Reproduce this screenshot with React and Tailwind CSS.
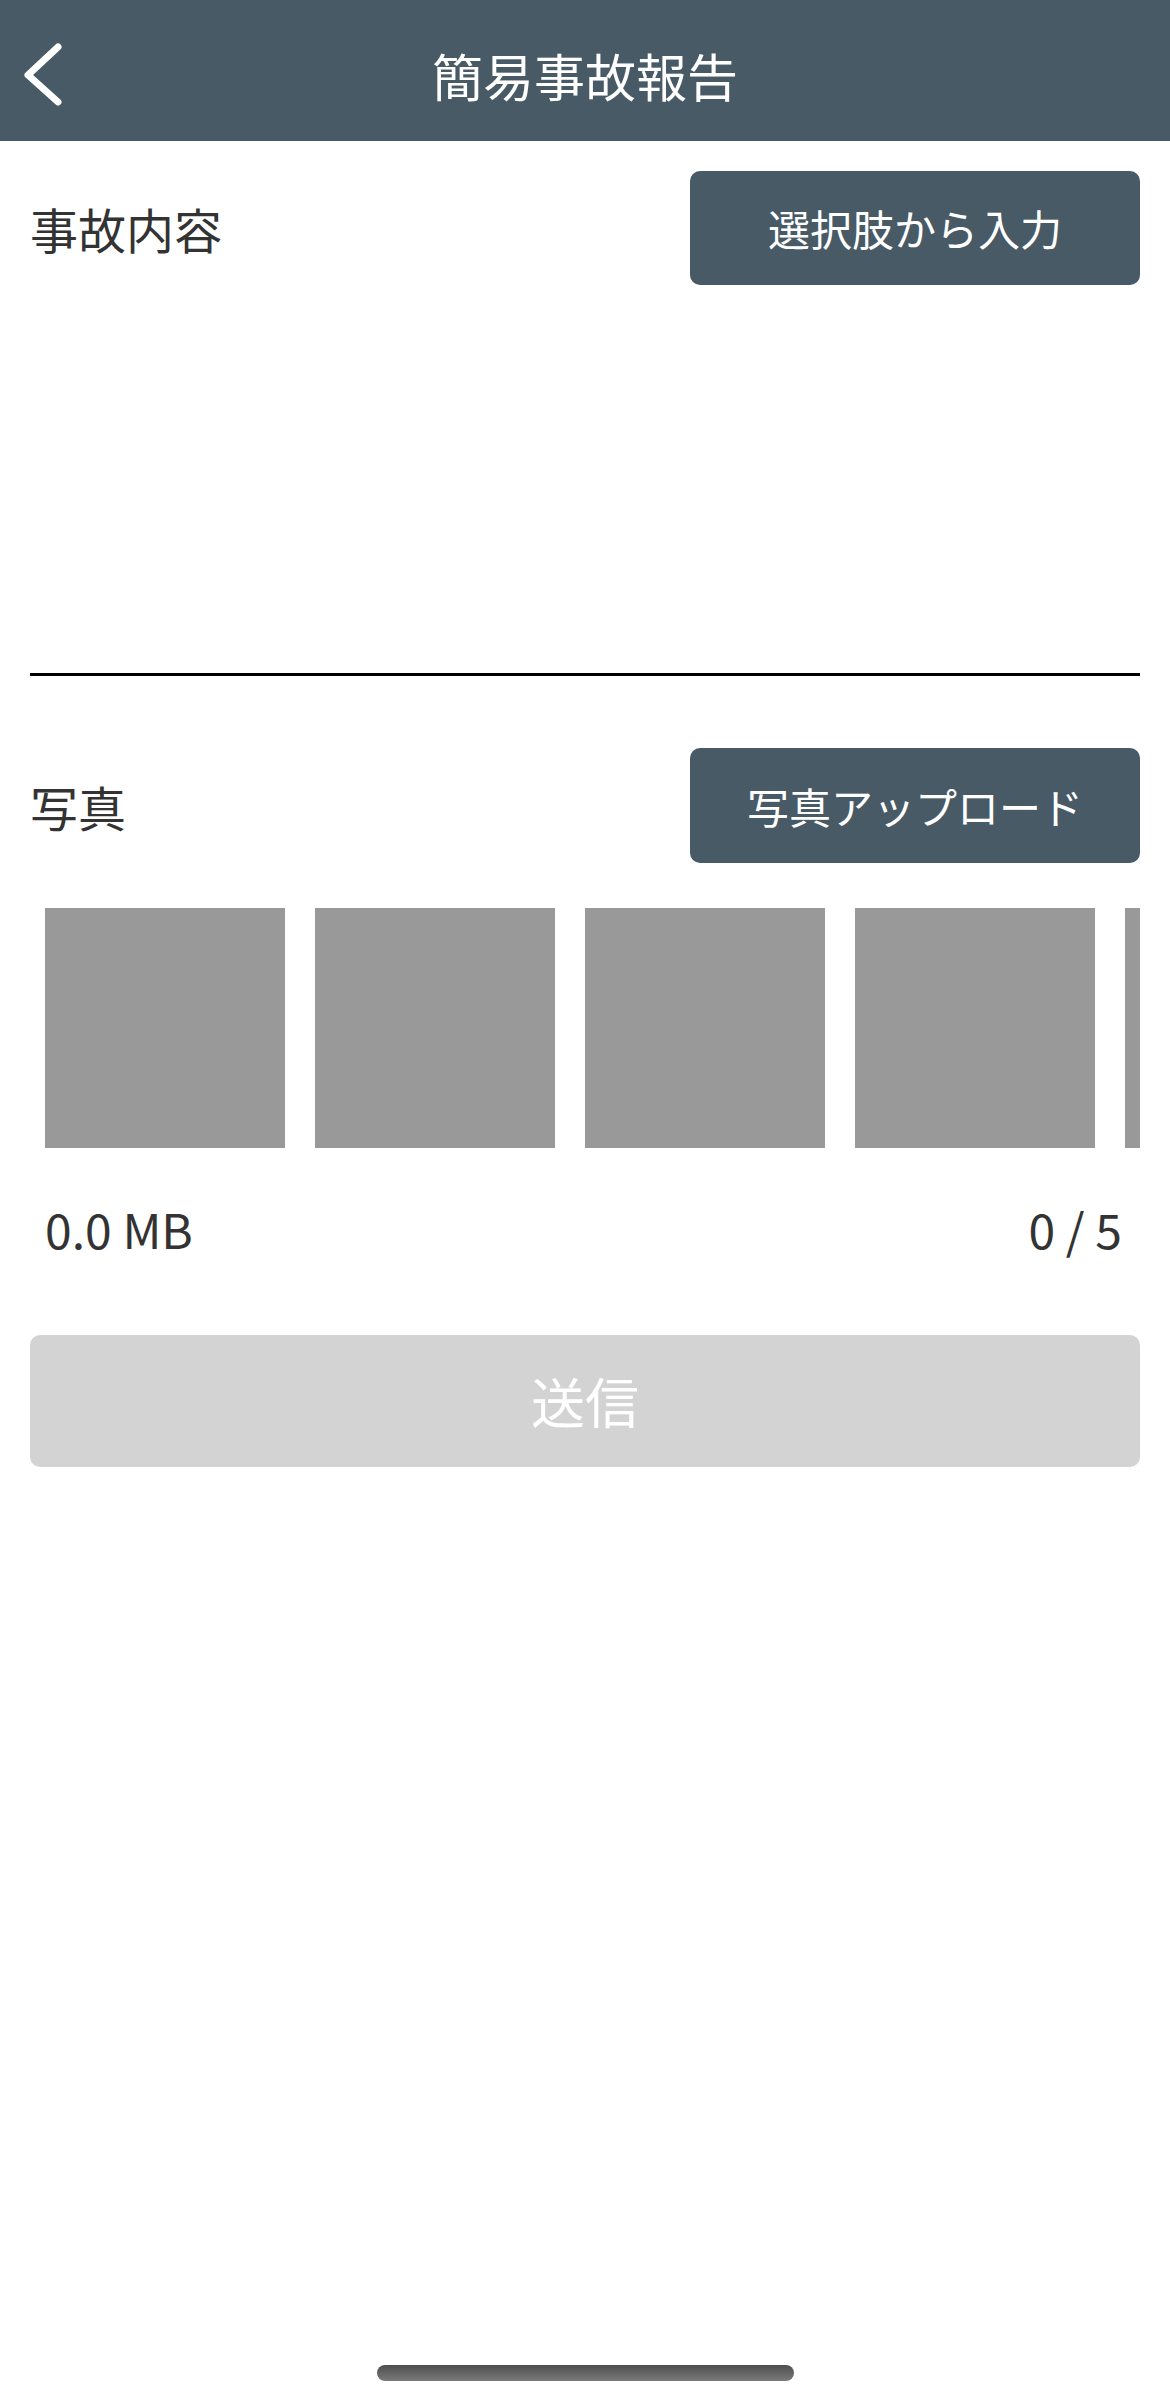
import React from "react";

export default function App() {
  const font = { fontFamily: '"Noto Sans CJK JP", "Noto Sans", sans-serif' };
  return (
    <div
      className="w-[1170px] h-[2400px] bg-white flex flex-col"
      style={font}
    >
      {/* Header */}
      <div className="relative h-[141px] bg-[#475a66] flex items-center justify-center shrink-0">
        <svg
          className="absolute left-[18px] top-[38px]"
          width="56"
          height="72"
          viewBox="0 0 56 72"
        >
          <path
            d="M40 9 L10 37 L40 64"
            fill="none"
            stroke="white"
            strokeWidth="7"
            strokeLinecap="round"
            strokeLinejoin="round"
          />
        </svg>
        <div className="text-white text-[51px] leading-none mt-[10px]">簡易事故報告</div>
      </div>

      <div className="px-[30px] pt-[30px] flex flex-col">
        {/* 事故内容 row */}
        <div className="flex items-center justify-between">
          <div className="text-[48px] text-[#333333] leading-none">事故内容</div>
          <button className="w-[450px] h-[114px] rounded-[10px] bg-[#475a66] text-white text-[42px] leading-none flex items-center justify-center">
            選択肢から入力
          </button>
        </div>
        <div className="h-[391px] border-b-[3px] border-black"></div>

        {/* 写真 row */}
        <div className="mt-[72px] flex items-center justify-between">
          <div className="text-[48px] text-[#333333] leading-none">写真</div>
          <button className="w-[450px] h-[115px] rounded-[10px] bg-[#475a66] text-white text-[42px] leading-none flex items-center justify-center">
            写真アップロード
          </button>
        </div>

        {/* Thumbnails */}
        <div className="mt-[45px] overflow-hidden">
          <div className="flex gap-[30px] pl-[15px]">
            <div className="w-[240px] h-[240px] shrink-0 bg-[#999999]"></div>
            <div className="w-[240px] h-[240px] shrink-0 bg-[#999999]"></div>
            <div className="w-[240px] h-[240px] shrink-0 bg-[#999999]"></div>
            <div className="w-[240px] h-[240px] shrink-0 bg-[#999999]"></div>
            <div className="w-[240px] h-[240px] shrink-0 bg-[#999999]"></div>
          </div>
        </div>

        {/* Stats */}
        <div className="mt-[44px] flex justify-between pl-[15px] pr-[18px] text-[48px] leading-[72px] text-[#333333]">
          <span>0.0 MB</span>
          <span>0 / 5</span>
        </div>

        {/* Submit */}
        <button className="mt-[71px] h-[132px] w-full rounded-[10px] bg-[#d3d3d3] text-white text-[54px] leading-none flex items-center justify-center">
          送信
        </button>
      </div>

      {/* Home indicator */}
      <div className="mt-auto mb-[19px] flex justify-center">
        <div className="w-[417px] h-[16px] rounded-full bg-gradient-to-b from-[#4e4e4e] to-[#7a7a7a]"></div>
      </div>
    </div>
  );
}
